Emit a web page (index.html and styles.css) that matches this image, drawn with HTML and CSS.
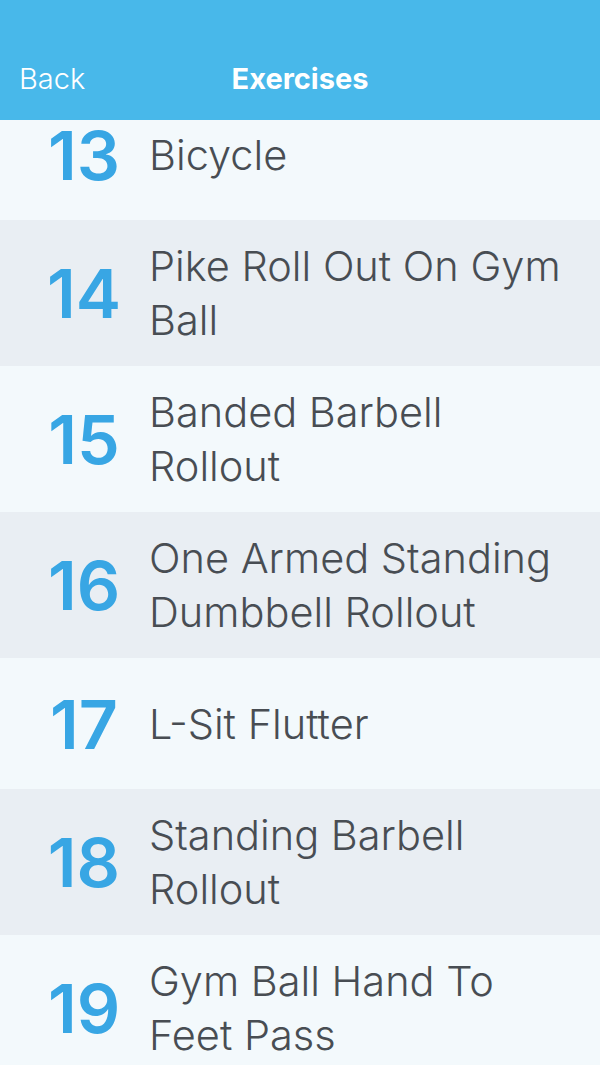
FILE: index.html
```html
<!DOCTYPE html>
<html lang="en">
	<head>
		<meta charset="UTF-8" />
		<meta name="viewport" content="width=device-width, initial-scale=1.0" />
		<title>Exercises</title>
		<link rel="stylesheet" href="styles.css">
	</head>
	<body>
		<div class="nav-bar">
			<span class="nav-back">Back</span>
			<span class="nav-title">Exercises</span>
			<span></span>
		</div>
		<div class="exercise-list">
			<div class="exercise-row">
				<div class="exercise-num">13</div>
				<div class="exercise-name">Bicycle</div>
			</div>
			<div class="exercise-row alt">
				<div class="exercise-num">14</div>
				<div class="exercise-name">Pike Roll Out On Gym Ball</div>
			</div>
			<div class="exercise-row">
				<div class="exercise-num">15</div>
				<div class="exercise-name">Banded Barbell Rollout</div>
			</div>
			<div class="exercise-row alt">
				<div class="exercise-num">16</div>
				<div class="exercise-name">One Armed Standing Dumbbell Rollout</div>
			</div>
			<div class="exercise-row">
				<div class="exercise-num">17</div>
				<div class="exercise-name">L-Sit Flutter</div>
			</div>
			<div class="exercise-row alt">
				<div class="exercise-num">18</div>
				<div class="exercise-name">Standing Barbell Rollout</div>
			</div>
			<div class="exercise-row">
				<div class="exercise-num">19</div>
				<div class="exercise-name">Gym Ball Hand To Feet Pass</div>
			</div>
		</div>
	</body>
</html>
```

FILE: styles.css
```css
body {
	font-family: Inter, "Noto Sans", sans-serif;
	margin: 0;
	height: 1065px;
	overflow: hidden;
	background: #f3f9fc;
}

.nav-bar {
	position: relative;
	z-index: 1;
	height: 120px;
	box-sizing: border-box;
	background: #48b8ea;
	color: #ffffff;
	display: grid;
	grid-template-columns: 1fr auto 1fr;
	align-items: end;
	padding: 0 19px 24px;
	font-size: 29px;
	line-height: 34px;
}

.nav-back {
	font-weight: 300;
}

.nav-title {
	font-weight: 700;
}

.exercise-list {
	margin-top: -31px;
}

.exercise-row {
	display: flex;
	align-items: center;
	min-height: 131px;
	box-sizing: border-box;
	padding: 19px 25px 19px 0;
	background: #f3f9fc;
}

.exercise-row.alt {
	background: #e9eef3;
}

.exercise-num {
	width: 120px;
	margin: 0 5px 0 24px;
	flex-shrink: 0;
	text-align: center;
	color: #38a6e4;
	font-size: 68px;
	font-weight: 600;
}

.exercise-name {
	color: #484d53;
	font-size: 41.5px;
	font-weight: 300;
	line-height: 54px;
}
```
